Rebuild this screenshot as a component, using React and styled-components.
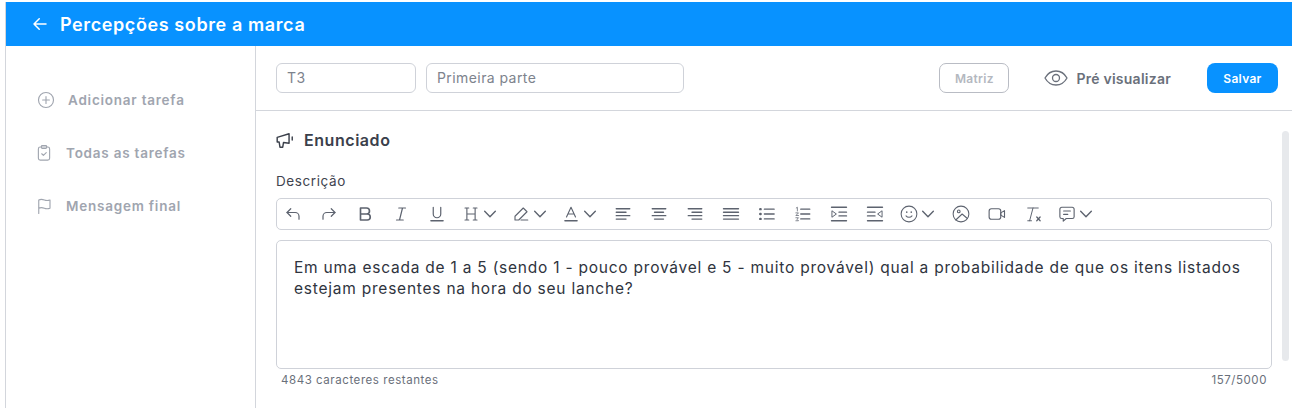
import React from "react";
import styled, { createGlobalStyle } from "styled-components";

const Global = createGlobalStyle`
  html, body { margin: 0; padding: 0; background: #fff; }
  body { font-family: Inter, "Noto Sans", sans-serif; }
  * { box-sizing: border-box; }
`;

const Page = styled.div`
  width: 1292px; height: 408px; padding: 2px 0 0 5px; overflow: hidden; background: #fff;
  display: flex; flex-direction: column;
`;
const Frame = styled.div`
  flex: 1; min-height: 0; display: flex; flex-direction: column; border-left: 1px solid #d3d6dc;
`;
const Header = styled.header`
  height: 44px; flex: none; background: #0892ff; display: flex; align-items: center; gap: 11px; padding-left: 25px; color: #fff;
`;
const Title = styled.h1`
  margin: 0; font-size: 18px; font-weight: 600; letter-spacing: 0.6px; color: #fff;
`;
const Body = styled.div`flex: 1; min-height: 0; display: flex;`;
const Sidebar = styled.nav`
  width: 250px; flex: none; border-right: 1px solid #d3d6dc; padding-top: 44px; display: flex; flex-direction: column; gap: 33px;
`;
const NavItem = styled.div`
  height: 20px; display: flex; align-items: center; gap: ${p => p.$gap}px; padding-left: ${p => p.$pad}px;
  color: #a0a5af; font-size: 13.5px; font-weight: 600; letter-spacing: 0.77px;
`;
const Main = styled.main`flex: 1; min-width: 0; display: flex; flex-direction: column;`;
const TopBar = styled.div`
  height: 65px; flex: none; border-bottom: 1px solid #d3d6dc; display: flex; align-items: center; padding: 0 14px 0 20px;
`;
const Field = styled.div`
  width: ${p => p.$w}px; height: 30px; border: 1px solid #cfd2d9; border-radius: 6px; display: flex; align-items: center;
  padding: 0 0 1px 10px; color: #7d838d; font-size: 14px; margin-right: 10px; letter-spacing: 0.42px;
`;
const Spacer = styled.div`flex: 1;`;
const MatrixButton = styled.button`
  width: 70px; height: 30px; border: 1px solid #b9bcc4; border-radius: 7px; background: #fff; color: #b4b8c0;
  font: 600 12px Inter, sans-serif; letter-spacing: 0.3px; padding: 0;
`;
const Preview = styled.div`
  display: flex; align-items: center; gap: 8px; margin-left: 35px; margin-right: 36px; color: #6a707b; font-size: 14px; font-weight: 600; letter-spacing: 0.25px;
`;
const SaveButton = styled.button`
  width: 71px; height: 30px; border: none; border-radius: 8px; background: #0892ff; color: #fff;
  font: 600 12px Inter, sans-serif; letter-spacing: 0.3px; padding: 0;
`;
const Content = styled.div`
  flex: 1; min-height: 0; display: flex; padding: 20px 3px 0 20px; gap: 10px;
`;
const Column = styled.div`flex: 1; min-width: 0; display: flex; flex-direction: column;`;
const Section = styled.div`
  display: flex; align-items: center; gap: 9px; height: 20px; margin-top: -1px; color: #3b404b; font-size: 16px; font-weight: 600; letter-spacing: 0.55px;
`;
const Label = styled.div`
  margin-top: 21px; height: 20px; display: flex; align-items: center; color: #3f444f; font-size: 13.5px; letter-spacing: 0.6px;
`;
const Toolbar = styled.div`
  margin-top: 7px; height: 32px; border: 1px solid #cfd2d9; border-radius: 5px; display: flex; align-items: center; padding-left: 7px; gap: 18px; color: #5d636f;
`;
const Group = styled.div`display: flex; align-items: center; gap: 2px; margin: 0 -2px 0 -2px;`;
const Editor = styled.div`
  margin-top: 10px; height: 129px; border: 1px solid #cfd2d9; border-radius: 5px; padding: 16px 17px; color: #2f343e; font-size: 15.5px; line-height: 21px; letter-spacing: 0.77px;
`;
const Footer = styled.div`
  margin-top: 3px; padding: 0 5px; display: flex; justify-content: space-between; color: #6a707b; font-size: 11.5px; line-height: 16px; letter-spacing: 0.56px;
`;
const Scrollbar = styled.div`
  width: 7px; height: 230px; flex: none; border-radius: 4px; background: #e7e9ec;
`;

const Svg = ({ size = 18, sw = 1.6, children, vb = "0 0 24 24" }) => (
  <svg width={size} height={size} viewBox={vb} fill="none" stroke="currentColor" strokeWidth={sw} strokeLinecap="round" strokeLinejoin="round" style={{ flex: "none", display: "block" }}>{children}</svg>
);
const Chev = () => <Svg size={16} sw={2.1}><path d="M4 8l8 8 8-8" /></Svg>;
const Lines = ({ rows }) => <Svg sw={1.8}>{rows.map((r, i) => <path key={i} d={`M${r[0]} ${5 + i * 4.6}H${r[1]}`} />)}</Svg>;

export default function App() {
  return (
    <Page>
      <Global />
      <Frame>
        <Header>
          <Svg size={18} sw={2}><path d="M20 12H4M11 5l-7 7 7 7" /></Svg>
          <Title>Percepções sobre a marca</Title>
        </Header>
        <Body>
          <Sidebar>
            <NavItem $pad={31} $gap={13}>
              <Svg size={18} sw={1.5}><circle cx="12" cy="12" r="10" /><path d="M12 7.5v9M7.5 12h9" /></Svg>
              Adicionar tarefa
            </NavItem>
            <NavItem $pad={29} $gap={13}>
              <Svg size={18} sw={1.5}><rect x="4.5" y="4" width="15" height="17.5" rx="2.5" /><rect x="8.5" y="2" width="7" height="4" rx="1.2" /><path d="M9 13l2.2 2.2L15 11.5" /></Svg>
              Todas as tarefas
            </NavItem>
            <NavItem $pad={29} $gap={13}>
              <Svg size={18} sw={1.5}><path d="M5 22V4c3-1.500 5-1 7.500 0s4.500 1 7.500 0v11c-3 1-5 1-7.500 0s-4.500-1.500-7.500 0" /></Svg>
              Mensagem final
            </NavItem>
          </Sidebar>
          <Main>
            <TopBar>
              <Field $w={140}>T3</Field>
              <Field $w={258}>Primeira parte</Field>
              <Spacer />
              <MatrixButton>Matriz</MatrixButton>
              <Preview>
                <Svg size={24} sw={1.3}><path d="M1 12C3.500 7.500 7.500 5 12 5s8.500 2.500 11 7c-2.500 4.500-6.500 7-11 7S3.500 16.500 1 12z" /><circle cx="12" cy="12" r="3.500" /></Svg>
                Pré visualizar
              </Preview>
              <SaveButton>Salvar</SaveButton>
            </TopBar>
            <Content>
              <Column>
                <Section>
                  <Svg size={19} sw={1.8}><path d="M1.500 8l15-4.500v12l-7-1-1 6H5l-1-6.500H1.500z" /><path d="M20.500 7.500v4" /></Svg>
                  Enunciado
                </Section>
                <Label>Descrição</Label>
                <Toolbar>
                  <Svg><path d="M9 5L4 10l5 5" /><path d="M4 10h11a5 5 0 0 1 5 5v4" /></Svg>
                  <Svg><path d="M15 5l5 5-5 5" /><path d="M20 10H9a5 5 0 0 0-5 5v4" /></Svg>
                  <Svg sw={2.2}><path d="M6 4h8a4 4 0 0 1 0 8H6zM6 12h9a4 4 0 0 1 0 8H6z" /></Svg>
                  <Svg><path d="M9 4h9M6 20h9M14 4l-4 16" /></Svg>
                  <Svg><path d="M7 3v9a5 5 0 0 0 10 0V3" /><path d="M4 21h16" strokeWidth="2.200" /></Svg>
                  <Group>
                    <Svg sw={1.500}><path d="M4 4h5M4 20h5M15 4h5M15 20h5M6.500 4v16M17.500 4v16M6.500 12h11" /></Svg>
                    <Chev />
                  </Group>
                  <Group>
                    <Svg sw={1.500}><path d="M4 15L15 4l5 5L9 20H4z" /><path d="M12 20h9" /></Svg>
                    <Chev />
                  </Group>
                  <Group>
                    <Svg sw={1.500}><path d="M6 16l6-13 6 13M8 12h8" /><path d="M4 21h16" strokeWidth="2.200" /></Svg>
                    <Chev />
                  </Group>
                  <Lines rows={[[3, 21], [3, 16], [3, 21], [3, 16]]} />
                  <Lines rows={[[3, 21], [6, 18], [3, 21], [6, 18]]} />
                  <Lines rows={[[3, 21], [8, 21], [3, 21], [8, 21]]} />
                  <Lines rows={[[2, 22], [2, 22], [2, 22], [2, 22]]} />
                  <Svg sw={1.800}><path d="M8.500 5.500h13M8.500 12h13M8.500 18.500h13" /><path d="M3 5.500h.5M3 12h.5M3 18.500h.5" strokeWidth="3.200" /></Svg>
                  <Svg sw={1.500}><path d="M9 5.500h12M9 12h12M9 18.500h12" strokeWidth="1.800" /><path d="M3 4l1.500-1v5M2.500 10.500h3.500L2.500 14h3.500M2.500 17h3.500l-2 2 2 2h-3.500" strokeWidth="1" /></Svg>
                  <Svg sw={1.800}><path d="M2 3h20M2 21h20M12 9.500h10M12 14.500h10" /><path d="M3 8l5.500 4L3 16z" strokeWidth="1.300" /></Svg>
                  <Svg sw={1.800}><path d="M2 3h20M2 21h20M2 9.500h10M2 14.500h10" /><path d="M21 8l-5.500 4 5.500 4z" strokeWidth="1.300" /></Svg>
                  <Group>
                    <Svg size={18} sw={1.400}><circle cx="12" cy="12" r="10.500" /><path d="M8 14.500c2 2.500 6 2.500 8 0" /><path d="M9 9.500v.1M15 9.500v.1" strokeWidth="2.200" /></Svg>
                    <Chev />
                  </Group>
                  <Svg size={18} sw={1.400}><circle cx="12" cy="12" r="10.500" /><circle cx="9" cy="8.500" r="1.800" /><path d="M5 20l8.500-8 7 6" /></Svg>
                  <Svg size={18} sw={1.500}><rect x="1.500" y="5" width="15.500" height="14" rx="3" /><path d="M17 10.500l5-3v9l-5-3z" /></Svg>
                  <Svg size={18} sw={1.300}><path d="M5 4h14M12 4L7.500 21M5 21h5" /><path d="M17 16l4.500 5M21.500 16L17 21" strokeWidth="1.700" /></Svg>
                  <Group>
                    <Svg size={18} sw={1.500}><path d="M5 3h14a2.500 2.500 0 0 1 2.500 2.500v10A2.500 2.500 0 0 1 19 18h-8l-4 3.500V18H5a2.500 2.500 0 0 1-2.500-2.500v-10A2.500 2.500 0 0 1 5 3z" /><path d="M7.500 8h9M7.500 12.500h5.500" /></Svg>
                    <Chev />
                  </Group>
                </Toolbar>
                <Editor>Em uma escada de 1 a 5 (sendo 1 - pouco provável e 5 - muito provável) qual a probabilidade de que os itens listados estejam presentes na hora do seu lanche?</Editor>
                <Footer><span>4843 caracteres restantes</span><span>157/5000</span></Footer>
              </Column>
              <Scrollbar />
            </Content>
          </Main>
        </Body>
      </Frame>
    </Page>
  );
}
